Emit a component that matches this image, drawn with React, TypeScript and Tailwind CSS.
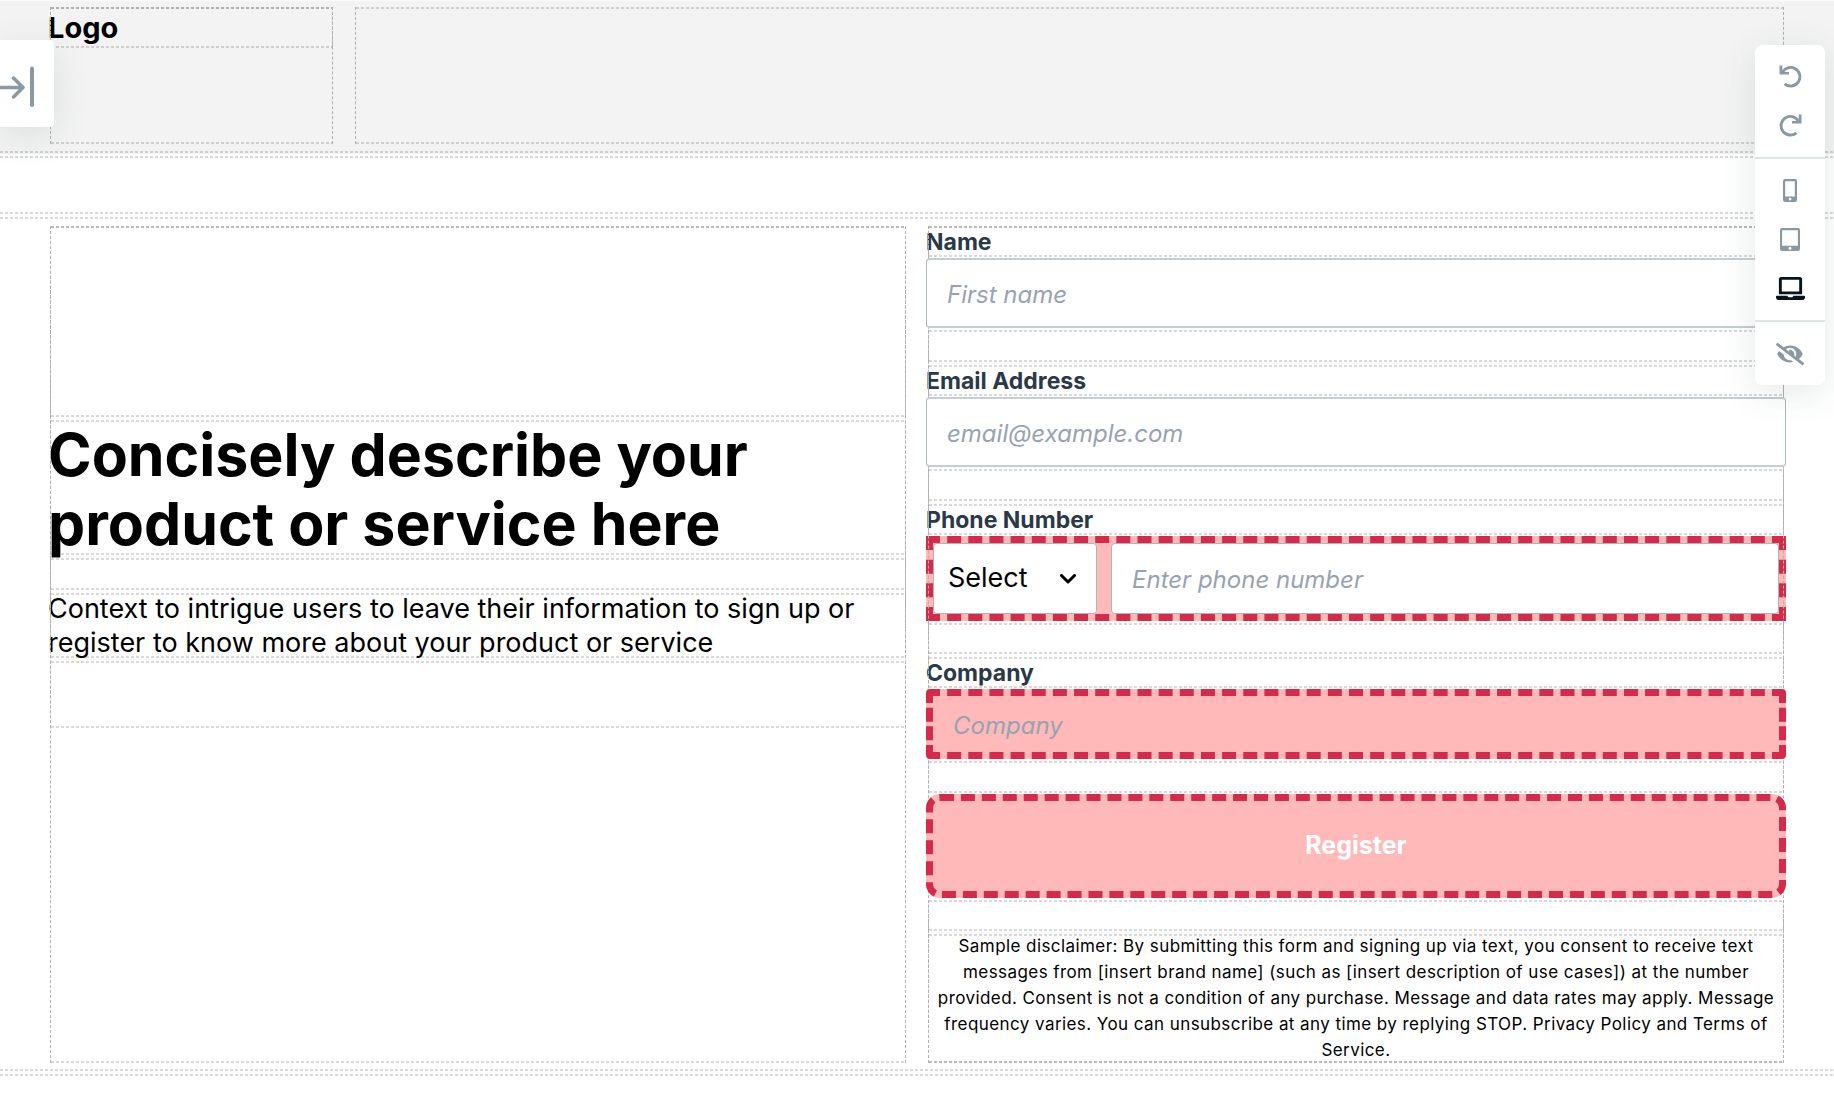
import React, { useId } from "react";
import { FaLaptop, FaEyeSlash } from "react-icons/fa";

const topLine =
  "relative after:pointer-events-none after:absolute after:inset-x-0 after:top-[2px] after:h-[2px] after:bg-[repeating-linear-gradient(90deg,rgba(0,0,0,0.15)_0_3px,transparent_3px_5px)]";
const bottomLine =
  "relative after:pointer-events-none after:absolute after:inset-x-0 after:bottom-[1px] after:h-[2px] after:bg-[repeating-linear-gradient(90deg,rgba(0,0,0,0.15)_0_3px,transparent_3px_5px)]";
const outlined =
  "relative after:pointer-events-none after:absolute after:inset-x-[2px] after:top-[2px] after:bottom-[1px] after:border-x after:border-dashed after:border-[#b0b0b0] after:[background:repeating-linear-gradient(90deg,rgba(0,0,0,0.15)_0_3px,transparent_3px_5px)_top/100%_2px_no-repeat,repeating-linear-gradient(90deg,rgba(0,0,0,0.15)_0_3px,transparent_3px_5px)_bottom/100%_2px_no-repeat]";
const band =
  "relative after:pointer-events-none after:absolute after:inset-x-0 after:top-[2px] after:bottom-[1px] after:[background:repeating-linear-gradient(90deg,rgba(0,0,0,0.15)_0_3px,transparent_3px_5px)_top/100%_2px_no-repeat,repeating-linear-gradient(90deg,rgba(0,0,0,0.15)_0_3px,transparent_3px_5px)_bottom/100%_2px_no-repeat]";
const field =
  "relative z-[1] block h-[70px] w-full rounded-[4px] border-x border-y-2 border-x-[#a9b6bb] border-y-[#c5cdd1] bg-white px-5 pt-[2px] text-2xl outline-none placeholder:italic placeholder:text-[#98a2b1]";
const invalid = "border-[7px] border-dashed border-[#d52b4b] bg-[#ffb9b9]";

function Spacer({ className }: { className: string }) {
  return <div className={`${outlined} ${className}`} />;
}

function Label({ htmlFor, children }: { htmlFor: string; children: React.ReactNode }) {
  return (
    <div className={`${outlined} h-[34px]`}>
      <label htmlFor={htmlFor} className="block text-[23px] leading-[36px] font-bold text-[#2b3947]">
        {children}
      </label>
    </div>
  );
}

function ToolButton({ label, active, children }: { label: string; active?: boolean; children: React.ReactNode }) {
  return (
    <button
      type="button"
      aria-label={label}
      className={`flex h-[49px] w-full items-center justify-center ${active ? "text-[#07131f]" : "text-[#8a99a1]"}`}
    >
      {children}
    </button>
  );
}

function UndoIcon({ className = "" }: { className?: string }) {
  return (
    <svg viewBox="0 0 23 23" className={`h-[23px] w-[23px] ${className}`} fill="none" stroke="currentColor">
      <path d="M3.200 7.800A9.300 9.300 0 1 1 5.600 18.800" strokeWidth="2.900" />
      <path d="M0.500 0.600H3.300V5.200L5.800 7H10V9.600H0.500Z" fill="currentColor" stroke="none" />
    </svg>
  );
}

function PhoneIcon() {
  return (
    <svg viewBox="0 0 14 23" className="h-[23px] w-[14px]" fill="currentColor" fillRule="evenodd">
      <path d="M2 0H12A2 2 0 0 1 14 2V21A2 2 0 0 1 12 23H2A2 2 0 0 1 0 21V2A2 2 0 0 1 2 0ZM2.200 2.200V17.500H11.800V2.200ZM7 18.700A1.400 1.400 0 1 0 7 21.500A1.400 1.400 0 1 0 7 18.700Z" />
    </svg>
  );
}

function TabletIcon() {
  return (
    <svg viewBox="0 0 20 23" className="h-[23px] w-[20px]" fill="currentColor" fillRule="evenodd">
      <path d="M2 0H18A2 2 0 0 1 20 2V21A2 2 0 0 1 18 23H2A2 2 0 0 1 0 21V2A2 2 0 0 1 2 0ZM2.100 2.200V17.800H17.900V2.200ZM10 18.700A1.500 1.500 0 1 0 10 21.700A1.500 1.500 0 1 0 10 18.700Z" />
    </svg>
  );
}

export default function App() {
  const id = useId();
  return (
    <div className="relative flex min-h-screen flex-col bg-white font-['Inter',sans-serif] text-black">
      <header className={`${bottomLine} border-t border-[#fbfbf4] bg-[#f3f3f3] px-12 pt-1 pb-[9px]`}>
        <div className="grid grid-cols-[1fr_5fr] gap-[18px]">
          <div className={`${outlined} h-[140px]`}>
            <div className={`${outlined} h-[44px]`}>
              <h2 className="text-[29px] leading-[46px] font-bold">Logo</h2>
            </div>
          </div>
          <div className={outlined} />
        </div>
      </header>

      <section className={`${band} h-[61px]`} />

      <main className={`${band} px-12 pt-[9px] pb-2`}>
        <div className="grid grid-cols-2 gap-[18px]">
          <div className={outlined}>
            <Spacer className="h-[194px]" />
            <div className={`${outlined} h-[138px] pt-[2px]`}>
              <h1 className="text-[59px] leading-[69px] font-bold">
                Concisely describe your
                <br />
                product or service here
              </h1>
            </div>
            <Spacer className="h-[35px]" />
            <div className={`${outlined} h-[68px] pt-px`}>
              <p className="text-[27px] leading-[34px]">
                Context to intrigue users to leave their information to sign up or
                <br />
                register to know more about your product or service
              </p>
            </div>
            <Spacer className="h-[70px]" />
          </div>

          <form className={outlined} onSubmit={(e) => e.preventDefault()}>
            <Label htmlFor={`${id}-name`}>Name</Label>
            <input id={`${id}-name`} type="text" placeholder="First name" className={field} />
            <Spacer className="h-[35px]" />

            <Label htmlFor={`${id}-email`}>Email Address</Label>
            <input id={`${id}-email`} type="email" placeholder="email@example.com" className={field} />
            <Spacer className="h-[35px]" />

            <Label htmlFor={`${id}-phone`}>Phone Number</Label>
            <div className={`${invalid} flex h-[85px] gap-[14px]`}>
              <div className="relative w-[164px] shrink-0">
                <select
                  aria-label="Country code"
                  className="block h-full w-full appearance-none rounded-[4px] border border-[#a9b6bb] bg-white pl-[14px] text-[27px]"
                >
                  <option>Select</option>
                </select>
                <svg
                  viewBox="0 0 16 10"
                  className="pointer-events-none absolute top-[31px] right-[21px] h-[10px] w-4"
                  fill="none"
                  stroke="#000"
                  strokeWidth="3"
                  strokeLinecap="round"
                  strokeLinejoin="round"
                >
                  <path d="M1.5 1.5 8 8l6.500-6.500" />
                </svg>
              </div>
              <input
                id={`${id}-phone`}
                type="tel"
                placeholder="Enter phone number"
                className="min-w-0 flex-1 rounded-[4px] border border-[#a9b6bb] bg-white px-5 pt-[2px] text-2xl outline-none placeholder:text-[#98a2b1] placeholder:italic"
              />
            </div>
            <Spacer className="h-[34px]" />

            <Label htmlFor={`${id}-company`}>Company</Label>
            <input
              id={`${id}-company`}
              type="text"
              placeholder="Company"
              className={`${invalid} relative z-[1] block h-[70px] w-full rounded-[4px] px-5 pt-[2px] text-2xl outline-none placeholder:text-[#98a2b1] placeholder:italic`}
            />
            <Spacer className="h-[35px]" />

            <button
              type="submit"
              className={`${invalid} relative z-[1] block h-[104px] w-full rounded-[14px] text-[25px] font-bold text-white`}
            >
              Register
            </button>
            <Spacer className="h-[34px]" />

            <div className={`${outlined} px-2 pt-px pb-px`}>
              <p className="text-center text-[17px] leading-[26px] tracking-wide">
                Sample disclaimer: By submitting this form and signing up via text, you consent to receive text messages
                from [insert brand name] (such as [insert description of use cases]) at the number provided. Consent is
                not a condition of any purchase. Message and data rates may apply. Message frequency varies. You can
                unsubscribe at any time by replying STOP. Privacy Policy and Terms of Service.
              </p>
            </div>
          </form>
        </div>
      </main>

      <section className={`${topLine} flex-1`} />

      <button
        type="button"
        aria-label="Expand panel"
        className="absolute top-10 left-0 z-10 h-[87px] w-[54px] rounded-r-[4px] bg-white text-[#8a99a1] shadow-[0_8px_36px_rgba(50,70,70,0.12)]"
      >
        <svg
          viewBox="0 0 54 87"
          className="h-[87px] w-[54px]"
          fill="none"
          stroke="currentColor"
          strokeLinecap="round"
          strokeLinejoin="round"
        >
          <path d="M-4 47.500H23M13.500 38 23 47.500 13.500 57" strokeWidth="3.500" />
          <path d="M32 28.500V65" strokeWidth="4" />
        </svg>
      </button>

      <aside className="absolute top-[45px] right-[9px] z-10 w-[70px] rounded-[7px] bg-white shadow-[0_8px_36px_rgba(50,70,70,0.12)]">
        <div className="border-b-2 border-[#dfe4e6] py-[7px]">
          <ToolButton label="Undo">
            <UndoIcon />
          </ToolButton>
          <ToolButton label="Redo">
            <UndoIcon className="-scale-x-100" />
          </ToolButton>
        </div>
        <div className="border-b-2 border-[#dfe4e6] py-[7px]">
          <ToolButton label="Phone view">
            <PhoneIcon />
          </ToolButton>
          <ToolButton label="Tablet view">
            <TabletIcon />
          </ToolButton>
          <ToolButton label="Desktop view" active>
            <FaLaptop size={29} />
          </ToolButton>
        </div>
        <div className="py-[7px]">
          <ToolButton label="Toggle outlines">
            <FaEyeSlash size={28} />
          </ToolButton>
        </div>
      </aside>
    </div>
  );
}
